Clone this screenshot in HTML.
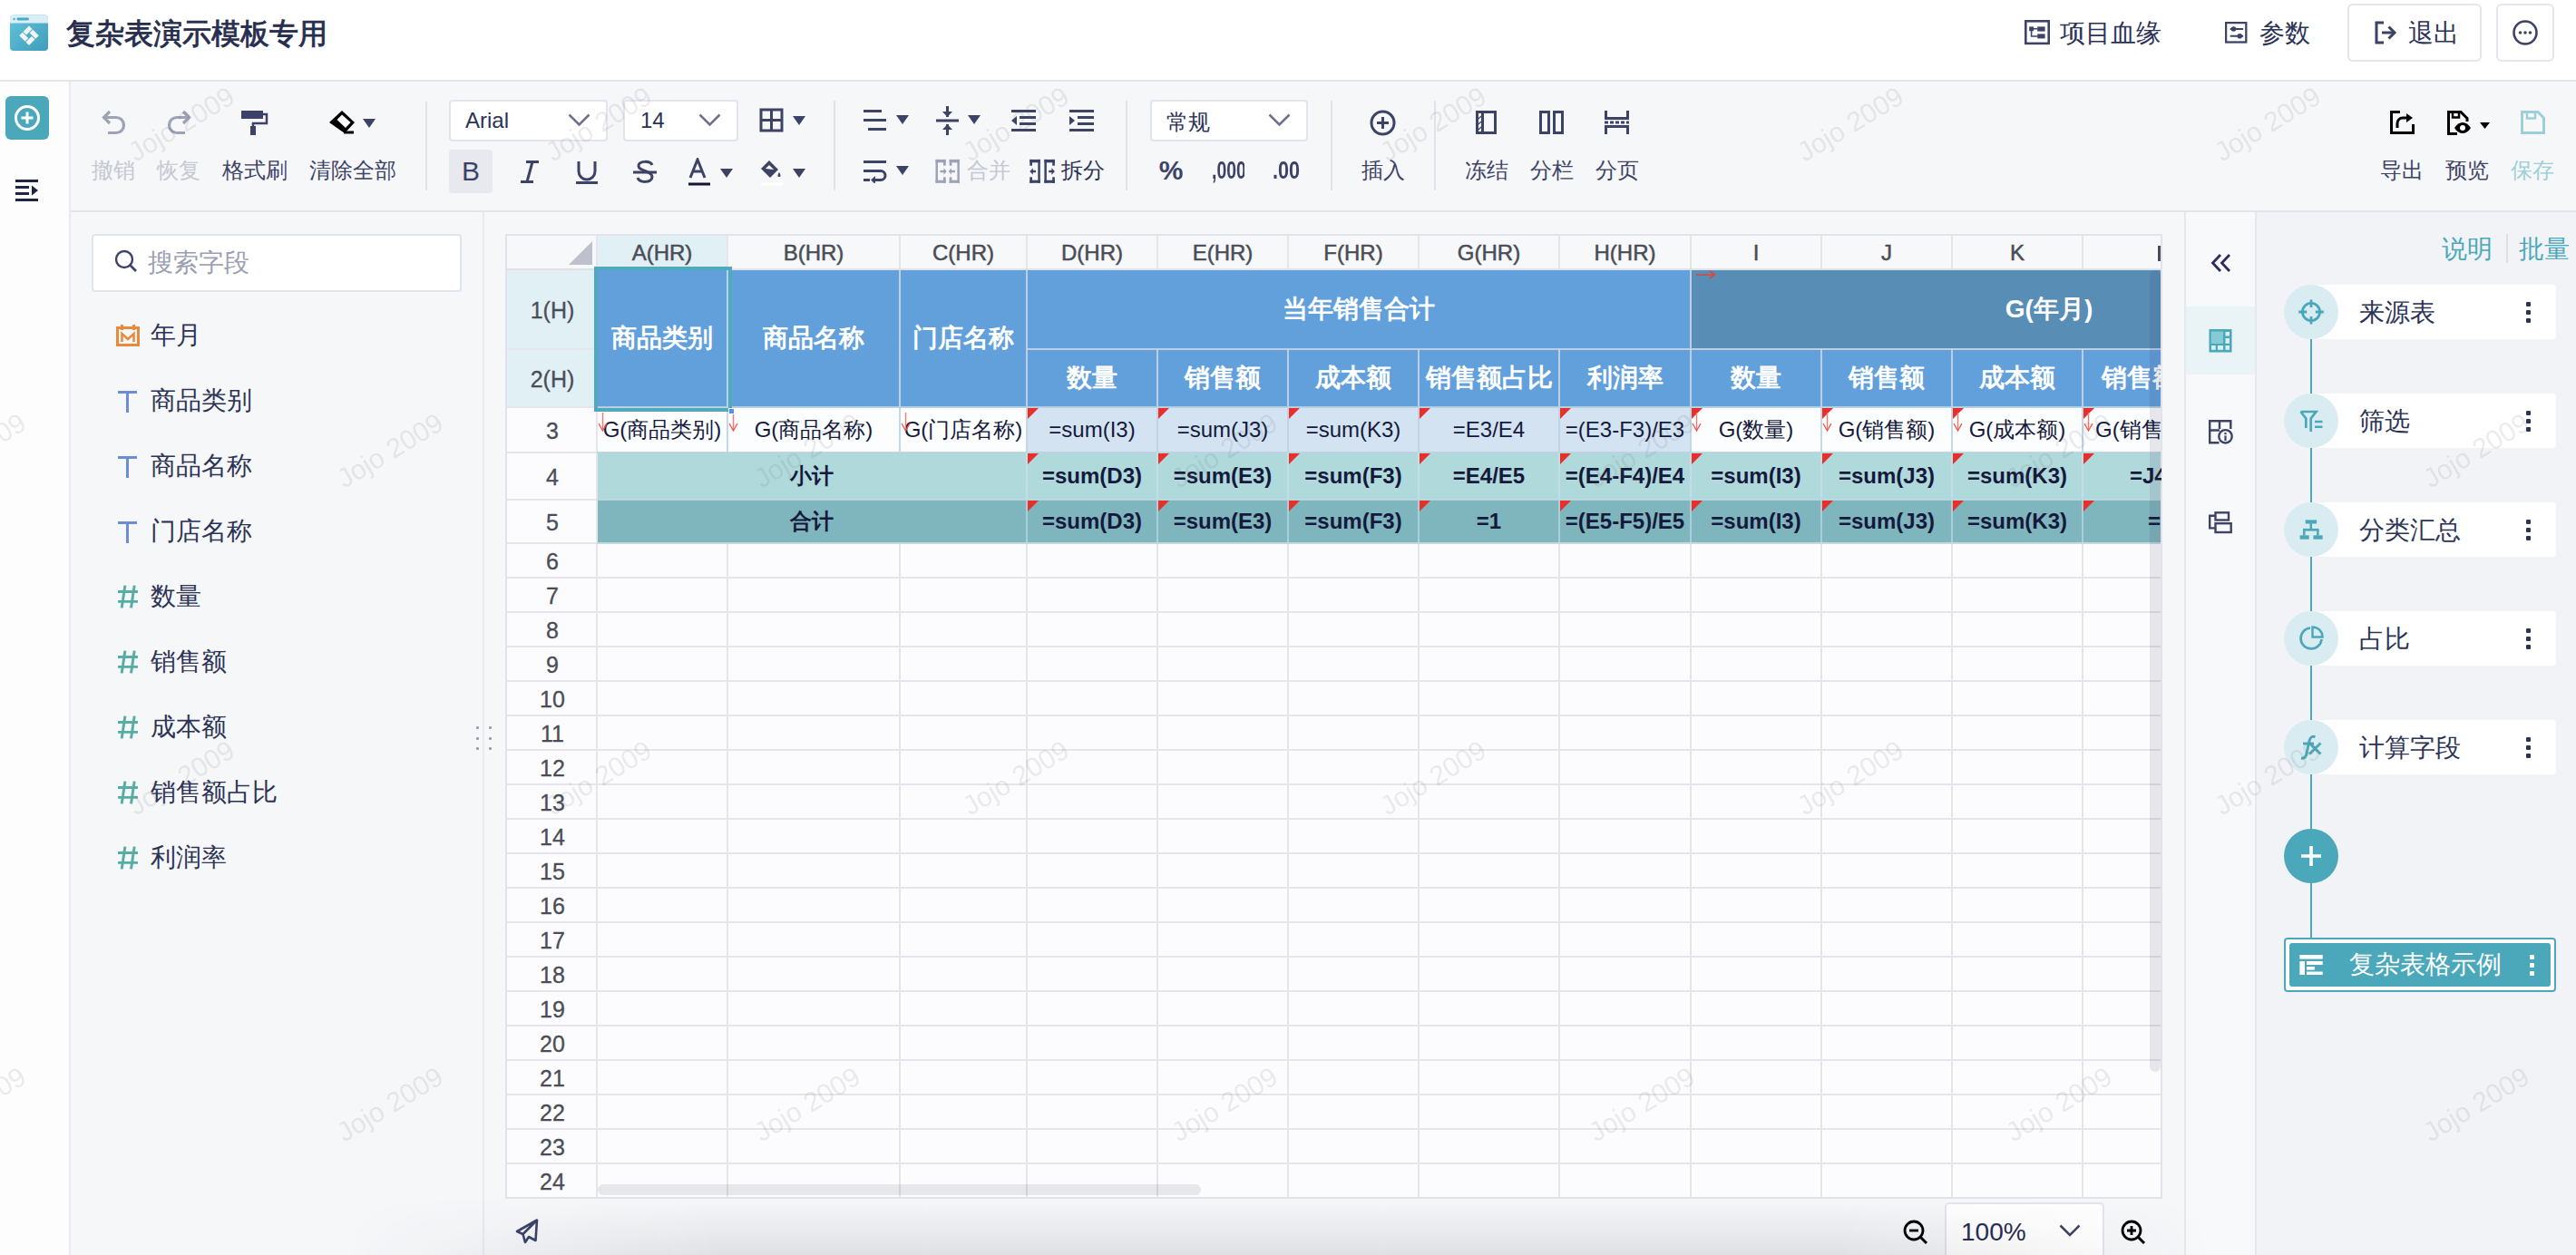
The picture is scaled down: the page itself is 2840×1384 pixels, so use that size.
<!DOCTYPE html><html><head><meta charset="utf-8"><style>
html,body{margin:0;padding:0;}
body{width:2840px;height:1384px;overflow:hidden;position:relative;background:#fff;font-family:"Liberation Sans",sans-serif;color:#2c3356;}
div,svg{box-sizing:border-box;}
</style></head><body>
<div style="position:absolute;left:0px;top:0px;width:2840px;height:88px;background:#ffffff;"></div>
<div style="position:absolute;left:0px;top:88px;width:2840px;height:2px;background:#e4e4ec;"></div>
<svg style="position:absolute;left:11px;top:16px;" width="42" height="40" viewBox="0 0 42 40"><defs><linearGradient id="lg" x1="0" y1="0" x2="1" y2="1"><stop offset="0" stop-color="#62c4dc"/><stop offset="1" stop-color="#3f9dbb"/></linearGradient></defs>
<rect x="0" y="0.5" width="42" height="39.5" rx="4" fill="url(#lg)"/>
<path d="M4 0.5 H38 A4 4 0 0 1 42 4.5 V9.5 H0 V4.5 A4 4 0 0 1 4 0.5 Z" fill="#d9eef5"/>
<circle cx="4.6" cy="5" r="1.3" fill="#56b5cd"/><rect x="7.5" y="3.6" width="13.5" height="2.8" rx="1.4" fill="#4aa9c3"/>
<g fill="#f4f6f7" transform="translate(21,23.2) scale(-1,1) rotate(45)"><rect x="-7.6" y="-7.6" width="9.2" height="5"/><rect x="2.6" y="-7.6" width="5" height="9.2"/><rect x="-1.6" y="2.6" width="9.2" height="5"/><rect x="-7.6" y="-1.6" width="5" height="9.2"/></g></svg>
<div style="position:absolute;left:73px;top:13px;width:320px;height:48px;line-height:48px;text-align:left;white-space:nowrap;overflow:hidden;font-size:32px;color:#272d4e;-webkit-text-stroke:0.9px #272d4e;">复杂表演示模板专用</div>
<svg style="position:absolute;left:2232px;top:22px;" width="28" height="28" viewBox="0 0 28 28"><rect x="1.3" y="1.3" width="25.4" height="24.6" fill="none" stroke="#3d4367" stroke-width="2.6"/><rect x="5.2" y="7.4" width="4.8" height="4.8" fill="#3d4367"/><rect x="14.2" y="7.4" width="8.4" height="5.2" fill="#3d4367"/><rect x="14.2" y="15.4" width="8.4" height="5" fill="#3d4367"/><path d="M10 9.8 H14.2 M7.6 12 V18 H14.2" fill="none" stroke="#3d4367" stroke-width="1.6"/></svg>
<div style="position:absolute;left:2271px;top:15px;width:120px;height:44px;line-height:44px;text-align:left;white-space:nowrap;overflow:hidden;font-size:28px;color:#2c3356;">项目血缘</div>
<svg style="position:absolute;left:2453px;top:24px;" width="26" height="24" viewBox="0 0 26 24"><rect x="1.1" y="1.1" width="22.2" height="21.4" fill="none" stroke="#3d4367" stroke-width="2.3"/><path d="M5.7 8 H20.1 M5.7 15.8 H20.1" stroke="#3d4367" stroke-width="2"/><circle cx="9.5" cy="8" r="2.8" fill="#3d4367"/><circle cx="16.3" cy="15.8" r="2.8" fill="#3d4367"/></svg>
<div style="position:absolute;left:2491px;top:15px;width:70px;height:44px;line-height:44px;text-align:left;white-space:nowrap;overflow:hidden;font-size:28px;color:#2c3356;">参数</div>
<div style="position:absolute;left:2588px;top:4px;width:148px;height:64px;border:2px solid #e4e6ee;border-radius:6px;background:#fff;"></div>
<svg style="position:absolute;left:2617px;top:23px;" width="26" height="26" viewBox="0 0 26 26"><path d="M11 2 H3 V24 H11" fill="none" stroke="#3d4367" stroke-width="3"/><path d="M9 13 H22" stroke="#3d4367" stroke-width="3"/><path d="M16.5 6.5 L23 13 L16.5 19.5" fill="none" stroke="#3d4367" stroke-width="3"/></svg>
<div style="position:absolute;left:2655px;top:15px;width:70px;height:44px;line-height:44px;text-align:left;white-space:nowrap;overflow:hidden;font-size:28px;color:#2c3356;">退出</div>
<div style="position:absolute;left:2752px;top:4px;width:64px;height:64px;border:2px solid #e4e6ee;border-radius:6px;background:#fff;"></div>
<svg style="position:absolute;left:2770px;top:22px;" width="28" height="28" viewBox="0 0 28 28"><circle cx="14" cy="14" r="12.5" fill="none" stroke="#3d4367" stroke-width="2.6"/><circle cx="8.5" cy="14" r="1.8" fill="#3d4367"/><circle cx="14" cy="14" r="1.8" fill="#3d4367"/><circle cx="19.5" cy="14" r="1.8" fill="#3d4367"/></svg>
<div style="position:absolute;left:0px;top:90px;width:76px;height:1294px;background:#fdfdfe;"></div>
<div style="position:absolute;left:76px;top:90px;width:2px;height:1294px;background:#e8eaf0;"></div>
<div style="position:absolute;left:6px;top:106px;width:48px;height:48px;background:#4ba8ba;border-radius:6px;"></div>
<svg style="position:absolute;left:14px;top:114px;" width="32" height="32" viewBox="0 0 32 32"><circle cx="16" cy="16" r="12.5" fill="none" stroke="#fff" stroke-width="3"/><path d="M16 9.5 V22.5 M9.5 16 H22.5" stroke="#fff" stroke-width="3"/></svg>
<svg style="position:absolute;left:17px;top:198px;" width="26" height="24" viewBox="0 0 26 24"><rect x="0" y="0" width="25" height="3" fill="#1f2547"/><rect x="0" y="7" width="15" height="3" fill="#1f2547"/><rect x="0" y="14" width="15" height="3" fill="#1f2547"/><rect x="0" y="21" width="25" height="3" fill="#1f2547"/><path d="M18 6.5 L25 12 L18 17.5 Z" fill="#1f2547"/></svg>
<div style="position:absolute;left:78px;top:90px;width:2762px;height:142px;background:#f6f7f9;"></div>
<div style="position:absolute;left:78px;top:232px;width:2762px;height:2px;background:#e4e4ec;"></div>
<svg style="position:absolute;left:112px;top:121px;" width="27" height="28" viewBox="0 0 27 28"><path d="M9 2 L2.5 8.5 L9 15" fill="none" stroke="#9ea2b6" stroke-width="3.2"/><path d="M3 8.5 H16 A8.5 8.5 0 0 1 16 25.5 H7" fill="none" stroke="#9ea2b6" stroke-width="3.2"/></svg>
<div style="position:absolute;left:24.5px;top:175px;width:200px;height:26px;line-height:26px;text-align:center;white-space:nowrap;overflow:hidden;font-size:24px;color:#c5c7d3;">撤销</div>
<svg style="position:absolute;left:184px;top:121px;" width="27" height="28" viewBox="0 0 27 28"><path d="M18 2 L24.5 8.5 L18 15" fill="none" stroke="#9ea2b6" stroke-width="3.2"/><path d="M24 8.5 H11 A8.5 8.5 0 0 0 11 25.5 H20" fill="none" stroke="#9ea2b6" stroke-width="3.2"/></svg>
<div style="position:absolute;left:96.5px;top:175px;width:200px;height:26px;line-height:26px;text-align:center;white-space:nowrap;overflow:hidden;font-size:24px;color:#c5c7d3;">恢复</div>
<svg style="position:absolute;left:266px;top:122px;" width="30" height="27" viewBox="0 0 30 27"><rect x="0" y="0" width="24" height="9" fill="#3d4367"/><path d="M24 4 H28 V14 H13 V18" fill="none" stroke="#3d4367" stroke-width="2.5"/><rect x="10" y="17" width="6" height="10" fill="#3d4367"/></svg>
<div style="position:absolute;left:180.5px;top:175px;width:200px;height:26px;line-height:26px;text-align:center;white-space:nowrap;overflow:hidden;font-size:24px;color:#3d4367;">格式刷</div>
<svg style="position:absolute;left:362px;top:121px;" width="54" height="29" viewBox="0 0 54 29"><path d="M15 1 L29 14 L18 26 L1 14 Z" fill="#000"/><path d="M15 5.5 L24.5 14 L19 20 L9.5 11 Z" fill="#fff"/><rect x="17" y="23.5" width="11" height="3" fill="#000"/><path d="M38 10 H52 L45 20 Z" fill="#3d4367"/></svg>
<div style="position:absolute;left:289px;top:175px;width:200px;height:26px;line-height:26px;text-align:center;white-space:nowrap;overflow:hidden;font-size:24px;color:#3d4367;">清除全部</div>
<div style="position:absolute;left:469px;top:112px;width:2px;height:98px;background:#e1e3ea;"></div>
<div style="position:absolute;left:495px;top:110px;width:175px;height:46px;background:#fff;border:2px solid #e3e5ec;border-radius:4px;"></div>
<div style="position:absolute;left:513px;top:110px;width:100px;height:46px;line-height:46px;text-align:left;white-space:nowrap;overflow:hidden;font-size:24px;color:#2c3356;">Arial</div>
<svg style="position:absolute;left:626px;top:125px;" width="25" height="15" viewBox="0 0 25 15"><path d="M1.5 1.5 L12.5 12.5 L23.5 1.5" fill="none" stroke="#6b7090" stroke-width="2.5"/></svg>
<div style="position:absolute;left:687px;top:110px;width:127px;height:46px;background:#fff;border:2px solid #e3e5ec;border-radius:4px;"></div>
<div style="position:absolute;left:706px;top:110px;width:60px;height:46px;line-height:46px;text-align:left;white-space:nowrap;overflow:hidden;font-size:24px;color:#2c3356;">14</div>
<svg style="position:absolute;left:770px;top:125px;" width="25" height="15" viewBox="0 0 25 15"><path d="M1.5 1.5 L12.5 12.5 L23.5 1.5" fill="none" stroke="#6b7090" stroke-width="2.5"/></svg>
<svg style="position:absolute;left:837px;top:119px;" width="52" height="28" viewBox="0 0 52 28"><rect x="2" y="2" width="23" height="23" fill="none" stroke="#3d4367" stroke-width="3"/><path d="M13.5 2 V25 M2 13.5 H25" stroke="#3d4367" stroke-width="3"/><path d="M37 9 H51 L44 19 Z" fill="#3d4367"/></svg>
<div style="position:absolute;left:495px;top:165px;width:48px;height:48px;background:#e8e9ee;border-radius:4px;"></div>
<div style="position:absolute;left:495px;top:165px;width:48px;height:48px;line-height:48px;text-align:center;white-space:nowrap;overflow:hidden;font-size:30px;color:#3d4367;">B</div>
<svg style="position:absolute;left:573px;top:177px;" width="22" height="25" viewBox="0 0 22 25"><path d="M7 1.5 H21 M1 23.5 H15 M14 1.5 L8 23.5" fill="none" stroke="#3d4367" stroke-width="3"/></svg>
<svg style="position:absolute;left:633px;top:176px;" width="28" height="28" viewBox="0 0 28 28"><path d="M5 2 V13 A9 9 0 0 0 23 13 V2" fill="none" stroke="#3d4367" stroke-width="3"/><rect x="2" y="24" width="24" height="3" fill="#3d4367"/></svg>
<svg style="position:absolute;left:697px;top:176px;" width="28" height="28" viewBox="0 0 28 28"><path d="M22 6 C20 1 7 1 7 7 C7 13 22 12 22 19 C22 26 8 26 6 20" fill="none" stroke="#3d4367" stroke-width="3"/><rect x="1" y="12.5" width="26" height="3" fill="#3d4367"/></svg>
<svg style="position:absolute;left:756px;top:174px;" width="56" height="32" viewBox="0 0 56 32"><path d="M5 22 L13 2 L21 22 M8 15 H18" fill="none" stroke="#3d4367" stroke-width="3"/><rect x="3" y="27.5" width="24" height="3" fill="#121536"/><path d="M38 12 H52 L45 22 Z" fill="#3d4367"/></svg>
<svg style="position:absolute;left:836px;top:174px;" width="56" height="32" viewBox="0 0 56 32"><path d="M3 12 L12 3 L22 13 L13 22 Z" fill="#3d4367"/><path d="M8 12 L12 8 L17 13 Z" fill="#fff"/><path d="M23 16 C21 19 21 21 23 21 C25 21 25 19 23 16 Z" fill="#3d4367"/><rect x="3" y="27.5" width="24" height="3" fill="#ffffff"/><path d="M38 12 H52 L45 22 Z" fill="#3d4367"/></svg>
<div style="position:absolute;left:919px;top:111px;width:2px;height:99px;background:#e1e3ea;"></div>
<svg style="position:absolute;left:951px;top:120px;" width="52" height="26" viewBox="0 0 52 26"><rect x="1" y="1" width="20" height="3" fill="#3d4367"/><rect x="1" y="11" width="25" height="3" fill="#3d4367"/><rect x="6" y="21" width="20" height="3" fill="#3d4367"/><path d="M37 7 H51 L44 17 Z" fill="#3d4367"/></svg>
<svg style="position:absolute;left:1032px;top:117px;" width="52" height="32" viewBox="0 0 52 32"><rect x="0" y="14.5" width="25" height="3" fill="#3d4367"/><path d="M12.5 0 V12 M12.5 20 V32" stroke="#3d4367" stroke-width="3"/><path d="M7 6 L12.5 12 L18 6 Z M7 26 L12.5 20 L18 26 Z" fill="#3d4367"/><path d="M35 10 H49 L42 20 Z" fill="#3d4367"/></svg>
<svg style="position:absolute;left:1115px;top:120px;" width="28" height="26" viewBox="0 0 28 26"><rect x="0" y="1" width="27" height="3" fill="#3d4367"/><rect x="9" y="8" width="18" height="3" fill="#3d4367"/><rect x="9" y="15" width="18" height="3" fill="#3d4367"/><rect x="0" y="22" width="27" height="3" fill="#3d4367"/><path d="M6 8 L0 13 L6 18 Z" fill="#3d4367"/></svg>
<svg style="position:absolute;left:1179px;top:120px;" width="28" height="26" viewBox="0 0 28 26"><rect x="0" y="1" width="27" height="3" fill="#3d4367"/><rect x="9" y="8" width="18" height="3" fill="#3d4367"/><rect x="9" y="15" width="18" height="3" fill="#3d4367"/><rect x="0" y="22" width="27" height="3" fill="#3d4367"/><path d="M0 8 L6 13 L0 18 Z" fill="#3d4367"/></svg>
<svg style="position:absolute;left:951px;top:176px;" width="52" height="26" viewBox="0 0 52 26"><rect x="1" y="1" width="25" height="3" fill="#3d4367"/><path d="M1 12.5 H20 A5 5 0 0 1 20 22.5 H12" fill="none" stroke="#3d4367" stroke-width="3"/><path d="M14 18 L9 22.5 L14 27 Z" fill="#3d4367"/><rect x="1" y="21" width="7" height="3" fill="#3d4367"/><path d="M37 7 H51 L44 17 Z" fill="#3d4367"/></svg>
<svg style="position:absolute;left:1030px;top:175px;" width="30" height="28" viewBox="0 0 30 28"><g fill="#9ea2b6"><rect x="1.50" y="0.9" width="2.5" height="25.9"/><rect x="25.40" y="0.9" width="2.5" height="25.9"/><rect x="1.50" y="0.9" width="11.2" height="3.4"/><rect x="16.70" y="0.9" width="11.2" height="3.4"/><rect x="1.50" y="23.7" width="11.2" height="3.1"/><rect x="16.70" y="23.7" width="11.2" height="3.1"/><rect x="10.00" y="0.9" width="2.7" height="6.8"/><rect x="16.70" y="0.9" width="2.7" height="6.8"/><rect x="10.00" y="20.3" width="2.7" height="6.5"/><rect x="16.70" y="20.3" width="2.7" height="6.5"/><rect x="6.50" y="12.8" width="4.5" height="2.4"/><rect x="18.40" y="12.8" width="4.5" height="2.4"/><path d="M10.5 10.3 L13.6 14 L10.5 17.7 Z M18.9 10.3 L15.8 14 L18.9 17.7 Z"/></g></svg>
<div style="position:absolute;left:1066px;top:175px;width:50px;height:26px;line-height:26px;text-align:left;white-space:nowrap;overflow:hidden;font-size:24px;color:#c5c7d3;">合并</div>
<svg style="position:absolute;left:1134px;top:175px;" width="31" height="28" viewBox="0 0 31 28"><g fill="#3d4367"><rect x="10.30" y="0.9" width="2.5" height="25.9"/><rect x="17.40" y="0.9" width="2.5" height="25.9"/><rect x="1.30" y="0.9" width="11.5" height="3.4"/><rect x="17.40" y="0.9" width="11.5" height="3.4"/><rect x="1.30" y="23.7" width="11.5" height="3.1"/><rect x="17.40" y="23.7" width="11.5" height="3.1"/><rect x="1.30" y="0.9" width="2.7" height="6.8"/><rect x="26.20" y="0.9" width="2.7" height="6.8"/><rect x="1.30" y="20.3" width="2.7" height="6.5"/><rect x="26.20" y="20.3" width="2.7" height="6.5"/><rect x="4.00" y="12.8" width="4" height="2.4"/><rect x="22.20" y="12.8" width="4" height="2.4"/><path d="M1.3 14 L4.8 10.3 V17.7 Z M28.9 14 L25.4 10.3 V17.7 Z"/></g></svg>
<div style="position:absolute;left:1170px;top:175px;width:50px;height:26px;line-height:26px;text-align:left;white-space:nowrap;overflow:hidden;font-size:24px;color:#2c3356;">拆分</div>
<div style="position:absolute;left:1241px;top:111px;width:2px;height:99px;background:#e1e3ea;"></div>
<div style="position:absolute;left:1268px;top:110px;width:174px;height:46px;background:#fff;border:2px solid #e3e5ec;border-radius:4px;"></div>
<div style="position:absolute;left:1286px;top:112px;width:80px;height:46px;line-height:46px;text-align:left;white-space:nowrap;overflow:hidden;font-size:24px;color:#2c3356;">常规</div>
<svg style="position:absolute;left:1398px;top:125px;" width="25" height="15" viewBox="0 0 25 15"><path d="M1.5 1.5 L12.5 12.5 L23.5 1.5" fill="none" stroke="#6b7090" stroke-width="2.5"/></svg>
<div style="position:absolute;left:1271px;top:170px;width:40px;height:36px;line-height:36px;text-align:center;white-space:nowrap;overflow:hidden;font-size:30px;font-weight:bold;color:#3d4367;">%</div>
<div style="position:absolute;left:1329px;top:170px;width:50px;height:36px;line-height:36px;text-align:center;white-space:nowrap;overflow:hidden;font-size:27px;font-weight:bold;color:#3d4367;transform:scaleX(0.72);">,000</div>
<div style="position:absolute;left:1393px;top:170px;width:50px;height:36px;line-height:36px;text-align:center;white-space:nowrap;overflow:hidden;font-size:27px;font-weight:bold;color:#3d4367;transform:scaleX(0.8);">.00</div>
<div style="position:absolute;left:1467px;top:111px;width:2px;height:99px;background:#e1e3ea;"></div>
<svg style="position:absolute;left:1510px;top:121px;" width="30" height="29" viewBox="0 0 30 29"><circle cx="14.5" cy="14.5" r="12.5" fill="none" stroke="#3d4367" stroke-width="3"/><path d="M14.5 8 V21 M8 14.5 H21" stroke="#3d4367" stroke-width="3"/></svg>
<div style="position:absolute;left:1425px;top:175px;width:200px;height:26px;line-height:26px;text-align:center;white-space:nowrap;overflow:hidden;font-size:24px;color:#3d4367;">插入</div>
<div style="position:absolute;left:1581px;top:111px;width:2px;height:99px;background:#e1e3ea;"></div>
<svg style="position:absolute;left:1627px;top:122px;" width="24" height="26" viewBox="0 0 24 26"><rect x="1.5" y="1.5" width="20" height="23" fill="none" stroke="#3d4367" stroke-width="3"/><rect x="6" y="1.5" width="3" height="23" fill="#3d4367"/><path d="M3 9 L6 6 M3 15 L6 12 M3 21 L6 18" stroke="#3d4367" stroke-width="1.2"/></svg>
<div style="position:absolute;left:1539px;top:175px;width:200px;height:26px;line-height:26px;text-align:center;white-space:nowrap;overflow:hidden;font-size:24px;color:#3d4367;">冻结</div>
<svg style="position:absolute;left:1697px;top:122px;" width="27" height="26" viewBox="0 0 27 26"><rect x="1.5" y="1.5" width="9" height="23" fill="none" stroke="#3d4367" stroke-width="3"/><rect x="16.5" y="1.5" width="9" height="23" fill="none" stroke="#3d4367" stroke-width="3"/></svg>
<div style="position:absolute;left:1611px;top:175px;width:200px;height:26px;line-height:26px;text-align:center;white-space:nowrap;overflow:hidden;font-size:24px;color:#3d4367;">分栏</div>
<svg style="position:absolute;left:1769px;top:122px;" width="27" height="26" viewBox="0 0 27 26"><path d="M1.5 0 V8.5 H25.5 V0 M1.5 26 V17.5 H25.5 V26" fill="none" stroke="#3d4367" stroke-width="3"/><path d="M0 13 H27" stroke="#3d4367" stroke-width="3" stroke-dasharray="4 2"/></svg>
<div style="position:absolute;left:1683px;top:175px;width:200px;height:26px;line-height:26px;text-align:center;white-space:nowrap;overflow:hidden;font-size:24px;color:#3d4367;">分页</div>
<svg style="position:absolute;left:2635px;top:122px;" width="27" height="26" viewBox="0 0 27 26"><path d="M11 1.5 H1.5 V24.5 H25.5 V15" fill="none" stroke="#000" stroke-width="3"/><path d="M8 19 V14 A6 6 0 0 1 14 8 H22" fill="none" stroke="#000" stroke-width="3"/><path d="M18 3 L25 8 L18 13 Z" fill="#000"/></svg>
<div style="position:absolute;left:2548px;top:175px;width:200px;height:26px;line-height:26px;text-align:center;white-space:nowrap;overflow:hidden;font-size:24px;color:#3d4367;">导出</div>
<svg style="position:absolute;left:2698px;top:122px;" width="50" height="27" viewBox="0 0 50 27"><path d="M11 25.5 H1.5 V1.5 H15 L22 8.5 V12" fill="none" stroke="#000" stroke-width="3"/><rect x="6" y="1.5" width="7" height="6" fill="none" stroke="#000" stroke-width="2.5"/><path d="M8 19 C13 11 21 11 26 19 C21 27 13 27 8 19 Z" fill="#000"/><circle cx="17" cy="19" r="3" fill="#fff"/><path d="M36 13 H47 L41.5 20 Z" fill="#000"/></svg>
<div style="position:absolute;left:2619.5px;top:175px;width:200px;height:26px;line-height:26px;text-align:center;white-space:nowrap;overflow:hidden;font-size:24px;color:#3d4367;">预览</div>
<svg style="position:absolute;left:2779px;top:122px;" width="27" height="26" viewBox="0 0 27 26"><path d="M1.5 1.5 H19 L25.5 8 V24.5 H1.5 Z" fill="none" stroke="#9dcfd9" stroke-width="3"/><rect x="7" y="1.5" width="9" height="7" fill="none" stroke="#9dcfd9" stroke-width="2.5"/></svg>
<div style="position:absolute;left:2692px;top:175px;width:200px;height:26px;line-height:26px;text-align:center;white-space:nowrap;overflow:hidden;font-size:24px;color:#9ecfd8;">保存</div>
<div style="position:absolute;left:78px;top:234px;width:454px;height:1150px;background:#f6f7f9;"></div>
<div style="position:absolute;left:532px;top:234px;width:2px;height:1150px;background:#e8eaf0;"></div>
<div style="position:absolute;left:101px;top:258px;width:408px;height:64px;background:#fff;border:2px solid #e3e5ec;border-radius:4px;"></div>
<svg style="position:absolute;left:126px;top:275px;" width="26" height="26" viewBox="0 0 26 26"><circle cx="11" cy="11" r="9" fill="none" stroke="#3d4367" stroke-width="2.4"/><path d="M17.5 17.5 L24 24" stroke="#3d4367" stroke-width="2.6"/></svg>
<div style="position:absolute;left:163px;top:270px;width:150px;height:40px;line-height:40px;text-align:left;white-space:nowrap;overflow:hidden;font-size:28px;color:#9a9fb4;">搜索字段</div>
<svg style="position:absolute;left:128px;top:358px;" width="26" height="24" viewBox="0 0 26 24"><rect x="1.5" y="3.5" width="23" height="19" fill="none" stroke="#e8893b" stroke-width="3"/><rect x="5" y="0" width="3" height="6" fill="#e8893b"/><rect x="18" y="0" width="3" height="6" fill="#e8893b"/><path d="M6.5 19 V10 L13 16 L19.5 10 V19" fill="none" stroke="#e8893b" stroke-width="2.5"/></svg>
<div style="position:absolute;left:166px;top:348px;width:300px;height:44px;line-height:44px;text-align:left;white-space:nowrap;overflow:hidden;font-size:28px;color:#2c3356;">年月</div>
<svg style="position:absolute;left:130px;top:431px;" width="22" height="24" viewBox="0 0 22 24"><rect x="0" y="0" width="21" height="3" fill="#6d8ed6"/><rect x="9" y="0" width="3" height="24" fill="#6d8ed6"/></svg>
<div style="position:absolute;left:166px;top:420px;width:300px;height:44px;line-height:44px;text-align:left;white-space:nowrap;overflow:hidden;font-size:28px;color:#2c3356;">商品类别</div>
<svg style="position:absolute;left:130px;top:503px;" width="22" height="24" viewBox="0 0 22 24"><rect x="0" y="0" width="21" height="3" fill="#6d8ed6"/><rect x="9" y="0" width="3" height="24" fill="#6d8ed6"/></svg>
<div style="position:absolute;left:166px;top:492px;width:300px;height:44px;line-height:44px;text-align:left;white-space:nowrap;overflow:hidden;font-size:28px;color:#2c3356;">商品名称</div>
<svg style="position:absolute;left:130px;top:575px;" width="22" height="24" viewBox="0 0 22 24"><rect x="0" y="0" width="21" height="3" fill="#6d8ed6"/><rect x="9" y="0" width="3" height="24" fill="#6d8ed6"/></svg>
<div style="position:absolute;left:166px;top:564px;width:300px;height:44px;line-height:44px;text-align:left;white-space:nowrap;overflow:hidden;font-size:28px;color:#2c3356;">门店名称</div>
<svg style="position:absolute;left:130px;top:645px;" width="22" height="26" viewBox="0 0 22 26"><path d="M0 7.5 H22 M0 18.4 H22" stroke="#58ada3" stroke-width="2.9"/><path d="M7.9 0.6 L4.2 25.4 M18.2 0.6 L14.5 25.4" stroke="#58ada3" stroke-width="3"/></svg>
<div style="position:absolute;left:166px;top:636px;width:300px;height:44px;line-height:44px;text-align:left;white-space:nowrap;overflow:hidden;font-size:28px;color:#2c3356;">数量</div>
<svg style="position:absolute;left:130px;top:717px;" width="22" height="26" viewBox="0 0 22 26"><path d="M0 7.5 H22 M0 18.4 H22" stroke="#58ada3" stroke-width="2.9"/><path d="M7.9 0.6 L4.2 25.4 M18.2 0.6 L14.5 25.4" stroke="#58ada3" stroke-width="3"/></svg>
<div style="position:absolute;left:166px;top:708px;width:300px;height:44px;line-height:44px;text-align:left;white-space:nowrap;overflow:hidden;font-size:28px;color:#2c3356;">销售额</div>
<svg style="position:absolute;left:130px;top:789px;" width="22" height="26" viewBox="0 0 22 26"><path d="M0 7.5 H22 M0 18.4 H22" stroke="#58ada3" stroke-width="2.9"/><path d="M7.9 0.6 L4.2 25.4 M18.2 0.6 L14.5 25.4" stroke="#58ada3" stroke-width="3"/></svg>
<div style="position:absolute;left:166px;top:780px;width:300px;height:44px;line-height:44px;text-align:left;white-space:nowrap;overflow:hidden;font-size:28px;color:#2c3356;">成本额</div>
<svg style="position:absolute;left:130px;top:861px;" width="22" height="26" viewBox="0 0 22 26"><path d="M0 7.5 H22 M0 18.4 H22" stroke="#58ada3" stroke-width="2.9"/><path d="M7.9 0.6 L4.2 25.4 M18.2 0.6 L14.5 25.4" stroke="#58ada3" stroke-width="3"/></svg>
<div style="position:absolute;left:166px;top:852px;width:300px;height:44px;line-height:44px;text-align:left;white-space:nowrap;overflow:hidden;font-size:28px;color:#2c3356;">销售额占比</div>
<svg style="position:absolute;left:130px;top:933px;" width="22" height="26" viewBox="0 0 22 26"><path d="M0 7.5 H22 M0 18.4 H22" stroke="#58ada3" stroke-width="2.9"/><path d="M7.9 0.6 L4.2 25.4 M18.2 0.6 L14.5 25.4" stroke="#58ada3" stroke-width="3"/></svg>
<div style="position:absolute;left:166px;top:924px;width:300px;height:44px;line-height:44px;text-align:left;white-space:nowrap;overflow:hidden;font-size:28px;color:#2c3356;">利润率</div>
<div style="position:absolute;left:534px;top:234px;width:1874px;height:1150px;background:#f6f7f9;"></div>
<div style="position:absolute;left:525px;top:801px;width:2.5px;height:2.5px;background:#9a9db0;border-radius:1px;"></div>
<div style="position:absolute;left:525px;top:813px;width:2.5px;height:2.5px;background:#9a9db0;border-radius:1px;"></div>
<div style="position:absolute;left:525px;top:824px;width:2.5px;height:2.5px;background:#9a9db0;border-radius:1px;"></div>
<div style="position:absolute;left:539px;top:801px;width:2.5px;height:2.5px;background:#9a9db0;border-radius:1px;"></div>
<div style="position:absolute;left:539px;top:813px;width:2.5px;height:2.5px;background:#9a9db0;border-radius:1px;"></div>
<div style="position:absolute;left:539px;top:824px;width:2.5px;height:2.5px;background:#9a9db0;border-radius:1px;"></div>
<div style="position:absolute;left:558px;top:259px;width:1825px;height:1062px;background:#fcfcfe;"></div>
<div style="position:absolute;left:558px;top:259px;width:1825px;height:38px;background:#f7f8fa;"></div>
<div style="position:absolute;left:658px;top:259px;width:144px;height:38px;background:#e1f0f5;"></div>
<div style="position:absolute;left:558px;top:297px;width:100px;height:152px;background:#e1f0f5;"></div>
<div style="position:absolute;left:558px;top:449px;width:100px;height:872px;background:#fcfcfe;"></div>
<div style="position:absolute;left:658px;top:297px;width:1725px;height:152px;background:#62a0dc;"></div>
<div style="position:absolute;left:1864px;top:297px;width:519px;height:88px;background:#588db6;"></div>
<div style="position:absolute;left:1132px;top:449px;width:732px;height:50px;background:#d3e3f2;"></div>
<div style="position:absolute;left:658px;top:449px;width:474px;height:50px;background:#fcfdff;"></div>
<div style="position:absolute;left:1864px;top:449px;width:519px;height:50px;background:#fcfdff;"></div>
<div style="position:absolute;left:658px;top:499px;width:1725px;height:52px;background:#b0d9db;"></div>
<div style="position:absolute;left:658px;top:551px;width:1725px;height:48px;background:#7fb5bd;"></div>
<div style="position:absolute;left:558px;top:598px;width:1825px;height:2px;background:#e5e5eb;"></div>
<div style="position:absolute;left:558px;top:636px;width:1825px;height:2px;background:#e5e5eb;"></div>
<div style="position:absolute;left:558px;top:674px;width:1825px;height:2px;background:#e5e5eb;"></div>
<div style="position:absolute;left:558px;top:712px;width:1825px;height:2px;background:#e5e5eb;"></div>
<div style="position:absolute;left:558px;top:750px;width:1825px;height:2px;background:#e5e5eb;"></div>
<div style="position:absolute;left:558px;top:788px;width:1825px;height:2px;background:#e5e5eb;"></div>
<div style="position:absolute;left:558px;top:826px;width:1825px;height:2px;background:#e5e5eb;"></div>
<div style="position:absolute;left:558px;top:864px;width:1825px;height:2px;background:#e5e5eb;"></div>
<div style="position:absolute;left:558px;top:902px;width:1825px;height:2px;background:#e5e5eb;"></div>
<div style="position:absolute;left:558px;top:940px;width:1825px;height:2px;background:#e5e5eb;"></div>
<div style="position:absolute;left:558px;top:978px;width:1825px;height:2px;background:#e5e5eb;"></div>
<div style="position:absolute;left:558px;top:1016px;width:1825px;height:2px;background:#e5e5eb;"></div>
<div style="position:absolute;left:558px;top:1054px;width:1825px;height:2px;background:#e5e5eb;"></div>
<div style="position:absolute;left:558px;top:1092px;width:1825px;height:2px;background:#e5e5eb;"></div>
<div style="position:absolute;left:558px;top:1130px;width:1825px;height:2px;background:#e5e5eb;"></div>
<div style="position:absolute;left:558px;top:1168px;width:1825px;height:2px;background:#e5e5eb;"></div>
<div style="position:absolute;left:558px;top:1206px;width:1825px;height:2px;background:#e5e5eb;"></div>
<div style="position:absolute;left:558px;top:1244px;width:1825px;height:2px;background:#e5e5eb;"></div>
<div style="position:absolute;left:558px;top:1282px;width:1825px;height:2px;background:#e5e5eb;"></div>
<div style="position:absolute;left:657px;top:599px;width:2px;height:722px;background:#e5e5eb;"></div>
<div style="position:absolute;left:801px;top:599px;width:2px;height:722px;background:#e5e5eb;"></div>
<div style="position:absolute;left:991px;top:599px;width:2px;height:722px;background:#e5e5eb;"></div>
<div style="position:absolute;left:1131px;top:599px;width:2px;height:722px;background:#e5e5eb;"></div>
<div style="position:absolute;left:1275px;top:599px;width:2px;height:722px;background:#e5e5eb;"></div>
<div style="position:absolute;left:1419px;top:599px;width:2px;height:722px;background:#e5e5eb;"></div>
<div style="position:absolute;left:1563px;top:599px;width:2px;height:722px;background:#e5e5eb;"></div>
<div style="position:absolute;left:1718px;top:599px;width:2px;height:722px;background:#e5e5eb;"></div>
<div style="position:absolute;left:1863px;top:599px;width:2px;height:722px;background:#e5e5eb;"></div>
<div style="position:absolute;left:2007px;top:599px;width:2px;height:722px;background:#e5e5eb;"></div>
<div style="position:absolute;left:2151px;top:599px;width:2px;height:722px;background:#e5e5eb;"></div>
<div style="position:absolute;left:2295px;top:599px;width:2px;height:722px;background:#e5e5eb;"></div>
<div style="position:absolute;left:657px;top:259px;width:2px;height:38px;background:#e5e5eb;"></div>
<div style="position:absolute;left:801px;top:259px;width:2px;height:38px;background:#e5e5eb;"></div>
<div style="position:absolute;left:991px;top:259px;width:2px;height:38px;background:#e5e5eb;"></div>
<div style="position:absolute;left:1131px;top:259px;width:2px;height:38px;background:#e5e5eb;"></div>
<div style="position:absolute;left:1275px;top:259px;width:2px;height:38px;background:#e5e5eb;"></div>
<div style="position:absolute;left:1419px;top:259px;width:2px;height:38px;background:#e5e5eb;"></div>
<div style="position:absolute;left:1563px;top:259px;width:2px;height:38px;background:#e5e5eb;"></div>
<div style="position:absolute;left:1718px;top:259px;width:2px;height:38px;background:#e5e5eb;"></div>
<div style="position:absolute;left:1863px;top:259px;width:2px;height:38px;background:#e5e5eb;"></div>
<div style="position:absolute;left:2007px;top:259px;width:2px;height:38px;background:#e5e5eb;"></div>
<div style="position:absolute;left:2151px;top:259px;width:2px;height:38px;background:#e5e5eb;"></div>
<div style="position:absolute;left:2295px;top:259px;width:2px;height:38px;background:#e5e5eb;"></div>
<div style="position:absolute;left:558px;top:296px;width:1825px;height:2px;background:#dfe1e5;"></div>
<div style="position:absolute;left:558px;top:384px;width:100px;height:2px;background:#e5e5eb;"></div>
<div style="position:absolute;left:558px;top:448px;width:100px;height:2px;background:#e5e5eb;"></div>
<div style="position:absolute;left:558px;top:498px;width:100px;height:2px;background:#e5e5eb;"></div>
<div style="position:absolute;left:558px;top:550px;width:100px;height:2px;background:#e5e5eb;"></div>
<div style="position:absolute;left:558px;top:598px;width:100px;height:2px;background:#e5e5eb;"></div>
<div style="position:absolute;left:657px;top:259px;width:2px;height:1062px;background:#e5e5eb;"></div>
<div style="position:absolute;left:801px;top:297px;width:2px;height:152px;background:rgba(200,212,228,0.9);"></div>
<div style="position:absolute;left:991px;top:297px;width:2px;height:152px;background:rgba(200,212,228,0.9);"></div>
<div style="position:absolute;left:1131px;top:297px;width:2px;height:152px;background:rgba(200,212,228,0.9);"></div>
<div style="position:absolute;left:1863px;top:297px;width:2px;height:152px;background:rgba(200,212,228,0.9);"></div>
<div style="position:absolute;left:1132px;top:384px;width:1251px;height:2px;background:rgba(200,212,228,0.9);"></div>
<div style="position:absolute;left:1275px;top:385px;width:2px;height:64px;background:rgba(200,212,228,0.9);"></div>
<div style="position:absolute;left:1419px;top:385px;width:2px;height:64px;background:rgba(200,212,228,0.9);"></div>
<div style="position:absolute;left:1563px;top:385px;width:2px;height:64px;background:rgba(200,212,228,0.9);"></div>
<div style="position:absolute;left:1718px;top:385px;width:2px;height:64px;background:rgba(200,212,228,0.9);"></div>
<div style="position:absolute;left:2007px;top:385px;width:2px;height:64px;background:rgba(200,212,228,0.9);"></div>
<div style="position:absolute;left:2151px;top:385px;width:2px;height:64px;background:rgba(200,212,228,0.9);"></div>
<div style="position:absolute;left:2295px;top:385px;width:2px;height:64px;background:rgba(200,212,228,0.9);"></div>
<div style="position:absolute;left:658px;top:448px;width:1725px;height:2px;background:rgba(180,208,226,0.95);"></div>
<div style="position:absolute;left:801px;top:449px;width:2px;height:50px;background:rgba(190,212,228,0.9);"></div>
<div style="position:absolute;left:991px;top:449px;width:2px;height:50px;background:rgba(190,212,228,0.9);"></div>
<div style="position:absolute;left:1131px;top:449px;width:2px;height:50px;background:rgba(190,212,228,0.9);"></div>
<div style="position:absolute;left:1275px;top:449px;width:2px;height:50px;background:rgba(190,212,228,0.9);"></div>
<div style="position:absolute;left:1419px;top:449px;width:2px;height:50px;background:rgba(190,212,228,0.9);"></div>
<div style="position:absolute;left:1563px;top:449px;width:2px;height:50px;background:rgba(190,212,228,0.9);"></div>
<div style="position:absolute;left:1718px;top:449px;width:2px;height:50px;background:rgba(190,212,228,0.9);"></div>
<div style="position:absolute;left:1863px;top:449px;width:2px;height:50px;background:rgba(190,212,228,0.9);"></div>
<div style="position:absolute;left:2007px;top:449px;width:2px;height:50px;background:rgba(190,212,228,0.9);"></div>
<div style="position:absolute;left:2151px;top:449px;width:2px;height:50px;background:rgba(190,212,228,0.9);"></div>
<div style="position:absolute;left:2295px;top:449px;width:2px;height:50px;background:rgba(190,212,228,0.9);"></div>
<div style="position:absolute;left:658px;top:498px;width:1725px;height:2px;background:rgba(190,210,222,0.9);"></div>
<div style="position:absolute;left:1131px;top:499px;width:2px;height:52px;background:rgba(200,220,234,0.8);"></div>
<div style="position:absolute;left:1131px;top:551px;width:2px;height:48px;background:rgba(190,214,228,0.75);"></div>
<div style="position:absolute;left:1275px;top:499px;width:2px;height:52px;background:rgba(200,220,234,0.8);"></div>
<div style="position:absolute;left:1275px;top:551px;width:2px;height:48px;background:rgba(190,214,228,0.75);"></div>
<div style="position:absolute;left:1419px;top:499px;width:2px;height:52px;background:rgba(200,220,234,0.8);"></div>
<div style="position:absolute;left:1419px;top:551px;width:2px;height:48px;background:rgba(190,214,228,0.75);"></div>
<div style="position:absolute;left:1563px;top:499px;width:2px;height:52px;background:rgba(200,220,234,0.8);"></div>
<div style="position:absolute;left:1563px;top:551px;width:2px;height:48px;background:rgba(190,214,228,0.75);"></div>
<div style="position:absolute;left:1718px;top:499px;width:2px;height:52px;background:rgba(200,220,234,0.8);"></div>
<div style="position:absolute;left:1718px;top:551px;width:2px;height:48px;background:rgba(190,214,228,0.75);"></div>
<div style="position:absolute;left:1863px;top:499px;width:2px;height:52px;background:rgba(200,220,234,0.8);"></div>
<div style="position:absolute;left:1863px;top:551px;width:2px;height:48px;background:rgba(190,214,228,0.75);"></div>
<div style="position:absolute;left:2007px;top:499px;width:2px;height:52px;background:rgba(200,220,234,0.8);"></div>
<div style="position:absolute;left:2007px;top:551px;width:2px;height:48px;background:rgba(190,214,228,0.75);"></div>
<div style="position:absolute;left:2151px;top:499px;width:2px;height:52px;background:rgba(200,220,234,0.8);"></div>
<div style="position:absolute;left:2151px;top:551px;width:2px;height:48px;background:rgba(190,214,228,0.75);"></div>
<div style="position:absolute;left:2295px;top:499px;width:2px;height:52px;background:rgba(200,220,234,0.8);"></div>
<div style="position:absolute;left:2295px;top:551px;width:2px;height:48px;background:rgba(190,214,228,0.75);"></div>
<div style="position:absolute;left:658px;top:550px;width:1725px;height:2px;background:rgba(190,215,225,0.9);"></div>
<div style="position:absolute;left:658px;top:598px;width:1725px;height:2px;background:rgba(190,215,225,0.9);"></div>
<div style="position:absolute;left:557px;top:258px;width:1827px;height:2px;background:#e2e3ea;"></div>
<div style="position:absolute;left:557px;top:258px;width:2px;height:1064px;background:#e2e3ea;"></div>
<div style="position:absolute;left:2382px;top:258px;width:2px;height:1064px;background:#e2e3ea;"></div>
<div style="position:absolute;left:557px;top:1320px;width:1827px;height:2px;background:#e2e3ea;"></div>
<svg style="position:absolute;left:627px;top:266px;" width="26" height="26" viewBox="0 0 26 26"><path d="M26 0 V26 H0 Z" fill="#bec0cc"/></svg>
<div style="position:absolute;left:658px;top:259px;width:144px;height:40px;line-height:40px;text-align:center;white-space:nowrap;overflow:hidden;font-size:24px;color:#4a4d57;-webkit-text-stroke:0.5px #4a4d57;">A(HR)</div>
<div style="position:absolute;left:802px;top:259px;width:190px;height:40px;line-height:40px;text-align:center;white-space:nowrap;overflow:hidden;font-size:24px;color:#4a4d57;-webkit-text-stroke:0.5px #4a4d57;">B(HR)</div>
<div style="position:absolute;left:992px;top:259px;width:140px;height:40px;line-height:40px;text-align:center;white-space:nowrap;overflow:hidden;font-size:24px;color:#4a4d57;-webkit-text-stroke:0.5px #4a4d57;">C(HR)</div>
<div style="position:absolute;left:1132px;top:259px;width:144px;height:40px;line-height:40px;text-align:center;white-space:nowrap;overflow:hidden;font-size:24px;color:#4a4d57;-webkit-text-stroke:0.5px #4a4d57;">D(HR)</div>
<div style="position:absolute;left:1276px;top:259px;width:144px;height:40px;line-height:40px;text-align:center;white-space:nowrap;overflow:hidden;font-size:24px;color:#4a4d57;-webkit-text-stroke:0.5px #4a4d57;">E(HR)</div>
<div style="position:absolute;left:1420px;top:259px;width:144px;height:40px;line-height:40px;text-align:center;white-space:nowrap;overflow:hidden;font-size:24px;color:#4a4d57;-webkit-text-stroke:0.5px #4a4d57;">F(HR)</div>
<div style="position:absolute;left:1564px;top:259px;width:155px;height:40px;line-height:40px;text-align:center;white-space:nowrap;overflow:hidden;font-size:24px;color:#4a4d57;-webkit-text-stroke:0.5px #4a4d57;">G(HR)</div>
<div style="position:absolute;left:1719px;top:259px;width:145px;height:40px;line-height:40px;text-align:center;white-space:nowrap;overflow:hidden;font-size:24px;color:#4a4d57;-webkit-text-stroke:0.5px #4a4d57;">H(HR)</div>
<div style="position:absolute;left:1864px;top:259px;width:144px;height:40px;line-height:40px;text-align:center;white-space:nowrap;overflow:hidden;font-size:24px;color:#4a4d57;-webkit-text-stroke:0.5px #4a4d57;">I</div>
<div style="position:absolute;left:2008px;top:259px;width:144px;height:40px;line-height:40px;text-align:center;white-space:nowrap;overflow:hidden;font-size:24px;color:#4a4d57;-webkit-text-stroke:0.5px #4a4d57;">J</div>
<div style="position:absolute;left:2152px;top:259px;width:144px;height:40px;line-height:40px;text-align:center;white-space:nowrap;overflow:hidden;font-size:24px;color:#4a4d57;-webkit-text-stroke:0.5px #4a4d57;">K</div>
<div style="position:absolute;left:2296px;top:259px;width:144px;height:40px;line-height:40px;text-align:center;white-space:nowrap;overflow:hidden;font-size:24px;color:#4a4d57;-webkit-text-stroke:0.5px #4a4d57;"></div>
<div style="position:absolute;left:2379px;top:271px;width:3px;height:17px;background:#4a4d57;"></div>
<div style="position:absolute;left:559px;top:298px;width:100px;height:88px;line-height:88px;text-align:center;white-space:nowrap;overflow:hidden;font-size:25px;color:#4a4d57;-webkit-text-stroke:0.3px #4a4d57;">1(H)</div>
<div style="position:absolute;left:559px;top:386px;width:100px;height:64px;line-height:64px;text-align:center;white-space:nowrap;overflow:hidden;font-size:25px;color:#4a4d57;-webkit-text-stroke:0.3px #4a4d57;">2(H)</div>
<div style="position:absolute;left:559px;top:450px;width:100px;height:50px;line-height:50px;text-align:center;white-space:nowrap;overflow:hidden;font-size:25px;color:#4a4d57;-webkit-text-stroke:0.3px #4a4d57;">3</div>
<div style="position:absolute;left:559px;top:500px;width:100px;height:52px;line-height:52px;text-align:center;white-space:nowrap;overflow:hidden;font-size:25px;color:#4a4d57;-webkit-text-stroke:0.3px #4a4d57;">4</div>
<div style="position:absolute;left:559px;top:552px;width:100px;height:48px;line-height:48px;text-align:center;white-space:nowrap;overflow:hidden;font-size:25px;color:#4a4d57;-webkit-text-stroke:0.3px #4a4d57;">5</div>
<div style="position:absolute;left:559px;top:600px;width:100px;height:38px;line-height:38px;text-align:center;white-space:nowrap;overflow:hidden;font-size:25px;color:#4a4d57;-webkit-text-stroke:0.3px #4a4d57;">6</div>
<div style="position:absolute;left:559px;top:638px;width:100px;height:38px;line-height:38px;text-align:center;white-space:nowrap;overflow:hidden;font-size:25px;color:#4a4d57;-webkit-text-stroke:0.3px #4a4d57;">7</div>
<div style="position:absolute;left:559px;top:676px;width:100px;height:38px;line-height:38px;text-align:center;white-space:nowrap;overflow:hidden;font-size:25px;color:#4a4d57;-webkit-text-stroke:0.3px #4a4d57;">8</div>
<div style="position:absolute;left:559px;top:714px;width:100px;height:38px;line-height:38px;text-align:center;white-space:nowrap;overflow:hidden;font-size:25px;color:#4a4d57;-webkit-text-stroke:0.3px #4a4d57;">9</div>
<div style="position:absolute;left:559px;top:752px;width:100px;height:38px;line-height:38px;text-align:center;white-space:nowrap;overflow:hidden;font-size:25px;color:#4a4d57;-webkit-text-stroke:0.3px #4a4d57;">10</div>
<div style="position:absolute;left:559px;top:790px;width:100px;height:38px;line-height:38px;text-align:center;white-space:nowrap;overflow:hidden;font-size:25px;color:#4a4d57;-webkit-text-stroke:0.3px #4a4d57;">11</div>
<div style="position:absolute;left:559px;top:828px;width:100px;height:38px;line-height:38px;text-align:center;white-space:nowrap;overflow:hidden;font-size:25px;color:#4a4d57;-webkit-text-stroke:0.3px #4a4d57;">12</div>
<div style="position:absolute;left:559px;top:866px;width:100px;height:38px;line-height:38px;text-align:center;white-space:nowrap;overflow:hidden;font-size:25px;color:#4a4d57;-webkit-text-stroke:0.3px #4a4d57;">13</div>
<div style="position:absolute;left:559px;top:904px;width:100px;height:38px;line-height:38px;text-align:center;white-space:nowrap;overflow:hidden;font-size:25px;color:#4a4d57;-webkit-text-stroke:0.3px #4a4d57;">14</div>
<div style="position:absolute;left:559px;top:942px;width:100px;height:38px;line-height:38px;text-align:center;white-space:nowrap;overflow:hidden;font-size:25px;color:#4a4d57;-webkit-text-stroke:0.3px #4a4d57;">15</div>
<div style="position:absolute;left:559px;top:980px;width:100px;height:38px;line-height:38px;text-align:center;white-space:nowrap;overflow:hidden;font-size:25px;color:#4a4d57;-webkit-text-stroke:0.3px #4a4d57;">16</div>
<div style="position:absolute;left:559px;top:1018px;width:100px;height:38px;line-height:38px;text-align:center;white-space:nowrap;overflow:hidden;font-size:25px;color:#4a4d57;-webkit-text-stroke:0.3px #4a4d57;">17</div>
<div style="position:absolute;left:559px;top:1056px;width:100px;height:38px;line-height:38px;text-align:center;white-space:nowrap;overflow:hidden;font-size:25px;color:#4a4d57;-webkit-text-stroke:0.3px #4a4d57;">18</div>
<div style="position:absolute;left:559px;top:1094px;width:100px;height:38px;line-height:38px;text-align:center;white-space:nowrap;overflow:hidden;font-size:25px;color:#4a4d57;-webkit-text-stroke:0.3px #4a4d57;">19</div>
<div style="position:absolute;left:559px;top:1132px;width:100px;height:38px;line-height:38px;text-align:center;white-space:nowrap;overflow:hidden;font-size:25px;color:#4a4d57;-webkit-text-stroke:0.3px #4a4d57;">20</div>
<div style="position:absolute;left:559px;top:1170px;width:100px;height:38px;line-height:38px;text-align:center;white-space:nowrap;overflow:hidden;font-size:25px;color:#4a4d57;-webkit-text-stroke:0.3px #4a4d57;">21</div>
<div style="position:absolute;left:559px;top:1208px;width:100px;height:38px;line-height:38px;text-align:center;white-space:nowrap;overflow:hidden;font-size:25px;color:#4a4d57;-webkit-text-stroke:0.3px #4a4d57;">22</div>
<div style="position:absolute;left:559px;top:1246px;width:100px;height:38px;line-height:38px;text-align:center;white-space:nowrap;overflow:hidden;font-size:25px;color:#4a4d57;-webkit-text-stroke:0.3px #4a4d57;">23</div>
<div style="position:absolute;left:559px;top:1284px;width:100px;height:38px;line-height:38px;text-align:center;white-space:nowrap;overflow:hidden;font-size:25px;color:#4a4d57;-webkit-text-stroke:0.3px #4a4d57;">24</div>
<div style="position:absolute;left:658px;top:297px;width:144px;height:152px;line-height:152px;text-align:center;white-space:nowrap;overflow:hidden;font-size:28px;font-weight:bold;color:#fff;">商品类别</div>
<div style="position:absolute;left:802px;top:297px;width:190px;height:152px;line-height:152px;text-align:center;white-space:nowrap;overflow:hidden;font-size:28px;font-weight:bold;color:#fff;">商品名称</div>
<div style="position:absolute;left:992px;top:297px;width:140px;height:152px;line-height:152px;text-align:center;white-space:nowrap;overflow:hidden;font-size:28px;font-weight:bold;color:#fff;">门店名称</div>
<div style="position:absolute;left:1132px;top:297px;width:732px;height:88px;line-height:88px;text-align:center;white-space:nowrap;overflow:hidden;font-size:28px;font-weight:bold;color:#fff;">当年销售合计</div>
<div style="position:absolute;left:2100px;top:297px;width:318px;height:88px;line-height:88px;text-align:center;white-space:nowrap;overflow:hidden;font-size:28px;font-weight:bold;color:#fff;">G(年月)</div>
<div style="position:absolute;left:1132px;top:385px;width:144px;height:64px;line-height:64px;text-align:center;white-space:nowrap;font-size:28px;font-weight:bold;color:#fff;">数量</div>
<div style="position:absolute;left:1276px;top:385px;width:144px;height:64px;line-height:64px;text-align:center;white-space:nowrap;font-size:28px;font-weight:bold;color:#fff;">销售额</div>
<div style="position:absolute;left:1420px;top:385px;width:144px;height:64px;line-height:64px;text-align:center;white-space:nowrap;font-size:28px;font-weight:bold;color:#fff;">成本额</div>
<div style="position:absolute;left:1564px;top:385px;width:155px;height:64px;line-height:64px;text-align:center;white-space:nowrap;font-size:28px;font-weight:bold;color:#fff;">销售额占比</div>
<div style="position:absolute;left:1719px;top:385px;width:145px;height:64px;line-height:64px;text-align:center;white-space:nowrap;font-size:28px;font-weight:bold;color:#fff;">利润率</div>
<div style="position:absolute;left:1864px;top:385px;width:144px;height:64px;line-height:64px;text-align:center;white-space:nowrap;font-size:28px;font-weight:bold;color:#fff;">数量</div>
<div style="position:absolute;left:2008px;top:385px;width:144px;height:64px;line-height:64px;text-align:center;white-space:nowrap;font-size:28px;font-weight:bold;color:#fff;">销售额</div>
<div style="position:absolute;left:2152px;top:385px;width:144px;height:64px;line-height:64px;text-align:center;white-space:nowrap;font-size:28px;font-weight:bold;color:#fff;">成本额</div>
<div style="position:absolute;left:2296px;top:385px;width:87px;height:64px;line-height:64px;white-space:nowrap;overflow:hidden;padding-left:21px;font-size:28px;font-weight:bold;color:#fff;">销售额</div>
<div style="position:absolute;left:658px;top:449px;width:144px;height:50px;line-height:50px;text-align:center;white-space:nowrap;overflow:hidden;font-size:24px;color:#151a3c;">G(商品类别)</div>
<div style="position:absolute;left:802px;top:449px;width:190px;height:50px;line-height:50px;text-align:center;white-space:nowrap;overflow:hidden;font-size:24px;color:#151a3c;">G(商品名称)</div>
<div style="position:absolute;left:992px;top:449px;width:140px;height:50px;line-height:50px;text-align:center;white-space:nowrap;overflow:hidden;font-size:24px;color:#151a3c;">G(门店名称)</div>
<div style="position:absolute;left:1132px;top:449px;width:144px;height:50px;line-height:50px;text-align:center;white-space:nowrap;overflow:hidden;font-size:24px;color:#151a3c;">=sum(I3)</div>
<div style="position:absolute;left:1276px;top:449px;width:144px;height:50px;line-height:50px;text-align:center;white-space:nowrap;overflow:hidden;font-size:24px;color:#151a3c;">=sum(J3)</div>
<div style="position:absolute;left:1420px;top:449px;width:144px;height:50px;line-height:50px;text-align:center;white-space:nowrap;overflow:hidden;font-size:24px;color:#151a3c;">=sum(K3)</div>
<div style="position:absolute;left:1564px;top:449px;width:155px;height:50px;line-height:50px;text-align:center;white-space:nowrap;overflow:hidden;font-size:24px;color:#151a3c;">=E3/E4</div>
<div style="position:absolute;left:1719px;top:449px;width:145px;height:50px;line-height:50px;text-align:center;white-space:nowrap;overflow:hidden;font-size:24px;color:#151a3c;">=(E3-F3)/E3</div>
<div style="position:absolute;left:1864px;top:449px;width:144px;height:50px;line-height:50px;text-align:center;white-space:nowrap;overflow:hidden;font-size:24px;color:#151a3c;">G(数量)</div>
<div style="position:absolute;left:2008px;top:449px;width:144px;height:50px;line-height:50px;text-align:center;white-space:nowrap;overflow:hidden;font-size:24px;color:#151a3c;">G(销售额)</div>
<div style="position:absolute;left:2152px;top:449px;width:144px;height:50px;line-height:50px;text-align:center;white-space:nowrap;overflow:hidden;font-size:24px;color:#151a3c;">G(成本额)</div>
<div style="position:absolute;left:2296px;top:449px;width:87px;height:50px;line-height:50px;text-align:left;white-space:nowrap;overflow:hidden;font-size:24px;padding-left:14px;color:#151a3c;">G(销售额)</div>
<div style="position:absolute;left:658px;top:499px;width:474px;height:52px;line-height:52px;text-align:center;white-space:nowrap;overflow:hidden;font-size:24px;font-weight:bold;color:#151a3c;">小计</div>
<div style="position:absolute;left:658px;top:551px;width:474px;height:48px;line-height:48px;text-align:center;white-space:nowrap;overflow:hidden;font-size:24px;font-weight:bold;color:#151a3c;">合计</div>
<div style="position:absolute;left:1132px;top:499px;width:144px;height:52px;line-height:52px;text-align:center;white-space:nowrap;overflow:hidden;font-size:24px;font-weight:bold;color:#151a3c;">=sum(D3)</div>
<div style="position:absolute;left:1132px;top:551px;width:144px;height:48px;line-height:48px;text-align:center;white-space:nowrap;overflow:hidden;font-size:24px;font-weight:bold;color:#151a3c;">=sum(D3)</div>
<div style="position:absolute;left:1276px;top:499px;width:144px;height:52px;line-height:52px;text-align:center;white-space:nowrap;overflow:hidden;font-size:24px;font-weight:bold;color:#151a3c;">=sum(E3)</div>
<div style="position:absolute;left:1276px;top:551px;width:144px;height:48px;line-height:48px;text-align:center;white-space:nowrap;overflow:hidden;font-size:24px;font-weight:bold;color:#151a3c;">=sum(E3)</div>
<div style="position:absolute;left:1420px;top:499px;width:144px;height:52px;line-height:52px;text-align:center;white-space:nowrap;overflow:hidden;font-size:24px;font-weight:bold;color:#151a3c;">=sum(F3)</div>
<div style="position:absolute;left:1420px;top:551px;width:144px;height:48px;line-height:48px;text-align:center;white-space:nowrap;overflow:hidden;font-size:24px;font-weight:bold;color:#151a3c;">=sum(F3)</div>
<div style="position:absolute;left:1564px;top:499px;width:155px;height:52px;line-height:52px;text-align:center;white-space:nowrap;overflow:hidden;font-size:24px;font-weight:bold;color:#151a3c;">=E4/E5</div>
<div style="position:absolute;left:1564px;top:551px;width:155px;height:48px;line-height:48px;text-align:center;white-space:nowrap;overflow:hidden;font-size:24px;font-weight:bold;color:#151a3c;">=1</div>
<div style="position:absolute;left:1719px;top:499px;width:145px;height:52px;line-height:52px;text-align:center;white-space:nowrap;overflow:hidden;font-size:24px;font-weight:bold;color:#151a3c;">=(E4-F4)/E4</div>
<div style="position:absolute;left:1719px;top:551px;width:145px;height:48px;line-height:48px;text-align:center;white-space:nowrap;overflow:hidden;font-size:24px;font-weight:bold;color:#151a3c;">=(E5-F5)/E5</div>
<div style="position:absolute;left:1864px;top:499px;width:144px;height:52px;line-height:52px;text-align:center;white-space:nowrap;overflow:hidden;font-size:24px;font-weight:bold;color:#151a3c;">=sum(I3)</div>
<div style="position:absolute;left:1864px;top:551px;width:144px;height:48px;line-height:48px;text-align:center;white-space:nowrap;overflow:hidden;font-size:24px;font-weight:bold;color:#151a3c;">=sum(I3)</div>
<div style="position:absolute;left:2008px;top:499px;width:144px;height:52px;line-height:52px;text-align:center;white-space:nowrap;overflow:hidden;font-size:24px;font-weight:bold;color:#151a3c;">=sum(J3)</div>
<div style="position:absolute;left:2008px;top:551px;width:144px;height:48px;line-height:48px;text-align:center;white-space:nowrap;overflow:hidden;font-size:24px;font-weight:bold;color:#151a3c;">=sum(J3)</div>
<div style="position:absolute;left:2152px;top:499px;width:144px;height:52px;line-height:52px;text-align:center;white-space:nowrap;overflow:hidden;font-size:24px;font-weight:bold;color:#151a3c;">=sum(K3)</div>
<div style="position:absolute;left:2152px;top:551px;width:144px;height:48px;line-height:48px;text-align:center;white-space:nowrap;overflow:hidden;font-size:24px;font-weight:bold;color:#151a3c;">=sum(K3)</div>
<div style="position:absolute;left:2296px;top:499px;width:87px;height:52px;line-height:52px;text-align:left;white-space:nowrap;overflow:hidden;font-size:24px;font-weight:bold;padding-left:52px;color:#151a3c;">=J4</div>
<div style="position:absolute;left:2296px;top:551px;width:87px;height:48px;line-height:48px;text-align:left;white-space:nowrap;overflow:hidden;font-size:24px;font-weight:bold;padding-left:72px;color:#151a3c;">=</div>
<svg style="position:absolute;left:1133px;top:450px;" width="12" height="12" viewBox="0 0 12 12"><path d="M0 0 H12 L0 12 Z" fill="#e8302a"/></svg>
<svg style="position:absolute;left:1133px;top:500px;" width="12" height="12" viewBox="0 0 12 12"><path d="M0 0 H12 L0 12 Z" fill="#e8302a"/></svg>
<svg style="position:absolute;left:1133px;top:552px;" width="12" height="12" viewBox="0 0 12 12"><path d="M0 0 H12 L0 12 Z" fill="#e8302a"/></svg>
<svg style="position:absolute;left:1277px;top:450px;" width="12" height="12" viewBox="0 0 12 12"><path d="M0 0 H12 L0 12 Z" fill="#e8302a"/></svg>
<svg style="position:absolute;left:1277px;top:500px;" width="12" height="12" viewBox="0 0 12 12"><path d="M0 0 H12 L0 12 Z" fill="#e8302a"/></svg>
<svg style="position:absolute;left:1277px;top:552px;" width="12" height="12" viewBox="0 0 12 12"><path d="M0 0 H12 L0 12 Z" fill="#e8302a"/></svg>
<svg style="position:absolute;left:1421px;top:450px;" width="12" height="12" viewBox="0 0 12 12"><path d="M0 0 H12 L0 12 Z" fill="#e8302a"/></svg>
<svg style="position:absolute;left:1421px;top:500px;" width="12" height="12" viewBox="0 0 12 12"><path d="M0 0 H12 L0 12 Z" fill="#e8302a"/></svg>
<svg style="position:absolute;left:1421px;top:552px;" width="12" height="12" viewBox="0 0 12 12"><path d="M0 0 H12 L0 12 Z" fill="#e8302a"/></svg>
<svg style="position:absolute;left:1565px;top:450px;" width="12" height="12" viewBox="0 0 12 12"><path d="M0 0 H12 L0 12 Z" fill="#e8302a"/></svg>
<svg style="position:absolute;left:1565px;top:500px;" width="12" height="12" viewBox="0 0 12 12"><path d="M0 0 H12 L0 12 Z" fill="#e8302a"/></svg>
<svg style="position:absolute;left:1565px;top:552px;" width="12" height="12" viewBox="0 0 12 12"><path d="M0 0 H12 L0 12 Z" fill="#e8302a"/></svg>
<svg style="position:absolute;left:1720px;top:450px;" width="12" height="12" viewBox="0 0 12 12"><path d="M0 0 H12 L0 12 Z" fill="#e8302a"/></svg>
<svg style="position:absolute;left:1720px;top:500px;" width="12" height="12" viewBox="0 0 12 12"><path d="M0 0 H12 L0 12 Z" fill="#e8302a"/></svg>
<svg style="position:absolute;left:1720px;top:552px;" width="12" height="12" viewBox="0 0 12 12"><path d="M0 0 H12 L0 12 Z" fill="#e8302a"/></svg>
<svg style="position:absolute;left:1865px;top:450px;" width="12" height="12" viewBox="0 0 12 12"><path d="M0 0 H12 L0 12 Z" fill="#e8302a"/></svg>
<svg style="position:absolute;left:1865px;top:500px;" width="12" height="12" viewBox="0 0 12 12"><path d="M0 0 H12 L0 12 Z" fill="#e8302a"/></svg>
<svg style="position:absolute;left:1865px;top:552px;" width="12" height="12" viewBox="0 0 12 12"><path d="M0 0 H12 L0 12 Z" fill="#e8302a"/></svg>
<svg style="position:absolute;left:2009px;top:450px;" width="12" height="12" viewBox="0 0 12 12"><path d="M0 0 H12 L0 12 Z" fill="#e8302a"/></svg>
<svg style="position:absolute;left:2009px;top:500px;" width="12" height="12" viewBox="0 0 12 12"><path d="M0 0 H12 L0 12 Z" fill="#e8302a"/></svg>
<svg style="position:absolute;left:2009px;top:552px;" width="12" height="12" viewBox="0 0 12 12"><path d="M0 0 H12 L0 12 Z" fill="#e8302a"/></svg>
<svg style="position:absolute;left:2153px;top:450px;" width="12" height="12" viewBox="0 0 12 12"><path d="M0 0 H12 L0 12 Z" fill="#e8302a"/></svg>
<svg style="position:absolute;left:2153px;top:500px;" width="12" height="12" viewBox="0 0 12 12"><path d="M0 0 H12 L0 12 Z" fill="#e8302a"/></svg>
<svg style="position:absolute;left:2153px;top:552px;" width="12" height="12" viewBox="0 0 12 12"><path d="M0 0 H12 L0 12 Z" fill="#e8302a"/></svg>
<svg style="position:absolute;left:2297px;top:450px;" width="12" height="12" viewBox="0 0 12 12"><path d="M0 0 H12 L0 12 Z" fill="#e8302a"/></svg>
<svg style="position:absolute;left:2297px;top:500px;" width="12" height="12" viewBox="0 0 12 12"><path d="M0 0 H12 L0 12 Z" fill="#e8302a"/></svg>
<svg style="position:absolute;left:2297px;top:552px;" width="12" height="12" viewBox="0 0 12 12"><path d="M0 0 H12 L0 12 Z" fill="#e8302a"/></svg>
<svg style="position:absolute;left:659px;top:455px;" width="11" height="22" viewBox="0 0 11 22"><path d="M5.5 0 V19.5" stroke="#f27a70" stroke-width="1.4"/><path d="M1 12 L5.5 20 L10 12" fill="none" stroke="#ee5247" stroke-width="1.3"/></svg>
<svg style="position:absolute;left:803px;top:455px;" width="11" height="22" viewBox="0 0 11 22"><path d="M5.5 0 V19.5" stroke="#f27a70" stroke-width="1.4"/><path d="M1 12 L5.5 20 L10 12" fill="none" stroke="#ee5247" stroke-width="1.3"/></svg>
<svg style="position:absolute;left:993px;top:455px;" width="11" height="22" viewBox="0 0 11 22"><path d="M5.5 0 V19.5" stroke="#f27a70" stroke-width="1.4"/><path d="M1 12 L5.5 20 L10 12" fill="none" stroke="#ee5247" stroke-width="1.3"/></svg>
<svg style="position:absolute;left:1865px;top:455px;" width="11" height="22" viewBox="0 0 11 22"><path d="M5.5 0 V19.5" stroke="#f27a70" stroke-width="1.4"/><path d="M1 12 L5.5 20 L10 12" fill="none" stroke="#ee5247" stroke-width="1.3"/></svg>
<svg style="position:absolute;left:2009px;top:455px;" width="11" height="22" viewBox="0 0 11 22"><path d="M5.5 0 V19.5" stroke="#f27a70" stroke-width="1.4"/><path d="M1 12 L5.5 20 L10 12" fill="none" stroke="#ee5247" stroke-width="1.3"/></svg>
<svg style="position:absolute;left:2153px;top:455px;" width="11" height="22" viewBox="0 0 11 22"><path d="M5.5 0 V19.5" stroke="#f27a70" stroke-width="1.4"/><path d="M1 12 L5.5 20 L10 12" fill="none" stroke="#ee5247" stroke-width="1.3"/></svg>
<svg style="position:absolute;left:2297px;top:455px;" width="11" height="22" viewBox="0 0 11 22"><path d="M5.5 0 V19.5" stroke="#f27a70" stroke-width="1.4"/><path d="M1 12 L5.5 20 L10 12" fill="none" stroke="#ee5247" stroke-width="1.3"/></svg>
<svg style="position:absolute;left:1870px;top:298px;" width="22" height="10" viewBox="0 0 22 10"><path d="M0 5 H20 M15 1 L20.5 5 L15 9" fill="none" stroke="#d9473d" stroke-width="1.6"/></svg>
<div style="position:absolute;left:655px;top:294px;width:152px;height:160px;border:4px solid #4eaabc;"></div>
<div style="position:absolute;left:803px;top:450px;width:7px;height:7px;background:#5b8cf7;border:1px solid #fff;"></div>
<div style="position:absolute;left:659px;top:1306px;width:665px;height:12px;background:rgba(40,40,70,0.1);border-radius:6px;"></div>
<div style="position:absolute;left:2370px;top:298px;width:12px;height:884px;background:rgba(40,40,70,0.1);border-radius:6px;"></div>
<svg style="position:absolute;left:568px;top:1344px;" width="26" height="28" viewBox="0 0 26 28"><path d="M24 1.5 L2 14 L8.5 17 L11 26 L15 20 L22.5 24 Z M8.5 17 L24 1.5 M15 20 L11 26" fill="none" stroke="#3d4367" stroke-width="2.6" stroke-linejoin="round"/></svg>
<svg style="position:absolute;left:2098px;top:1345px;" width="28" height="28" viewBox="0 0 28 28"><circle cx="12" cy="12" r="10" fill="none" stroke="#000" stroke-width="2.8"/><path d="M7 12 H17" stroke="#000" stroke-width="2.8"/><path d="M19 19 L26 26" stroke="#000" stroke-width="3"/></svg>
<div style="position:absolute;left:2144px;top:1326px;width:176px;height:74px;background:#fff;border:2px solid #e4e4ec;border-radius:5px;"></div>
<div style="position:absolute;left:2162px;top:1336px;width:100px;height:46px;line-height:46px;text-align:left;white-space:nowrap;overflow:hidden;font-size:28px;color:#272d52;">100%</div>
<svg style="position:absolute;left:2270px;top:1350px;" width="25" height="15" viewBox="0 0 25 15"><path d="M1.5 1.5 L12 12 L22.5 1.5" fill="none" stroke="#3d4367" stroke-width="2.5"/></svg>
<svg style="position:absolute;left:2338px;top:1345px;" width="28" height="28" viewBox="0 0 28 28"><circle cx="12" cy="12" r="10" fill="none" stroke="#000" stroke-width="2.8"/><path d="M7 12 H17 M12 7 V17" stroke="#000" stroke-width="2.8"/><path d="M19 19 L26 26" stroke="#000" stroke-width="3"/></svg>
<div style="position:absolute;left:2408px;top:234px;width:2px;height:1150px;background:#e6e8ee;"></div>
<div style="position:absolute;left:2410px;top:234px;width:76px;height:1150px;background:#f8f9fb;"></div>
<div style="position:absolute;left:2486px;top:234px;width:2px;height:1150px;background:#e6e8ee;"></div>
<div style="position:absolute;left:2410px;top:338px;width:76px;height:75px;background:#eaf3f6;"></div>
<svg style="position:absolute;left:2437px;top:279px;" width="24" height="23" viewBox="0 0 24 23"><path d="M11 2 L2.5 11 L11 20 M21 2 L12.5 11 L21 20" fill="none" stroke="#2a2f55" stroke-width="2.8"/></svg>
<svg style="position:absolute;left:2435px;top:363px;" width="26" height="26" viewBox="0 0 26 26"><rect x="0.5" y="0" width="25" height="25.5" fill="#4ba8ba"/><rect x="2.7" y="2.5" width="13.3" height="13.5" fill="#84cbd6"/><rect x="18.5" y="3" width="4.5" height="4.5" fill="#dcf0f3"/><rect x="18.5" y="10" width="4.5" height="5.8" fill="#dcf0f3"/><rect x="3" y="18" width="4.7" height="4.8" fill="#dcf0f3"/><rect x="10" y="18" width="6" height="4.8" fill="#dcf0f3"/><rect x="18.5" y="18" width="4.5" height="4.8" fill="#dcf0f3"/></svg>
<svg style="position:absolute;left:2435px;top:463px;" width="28" height="28" viewBox="0 0 28 28"><path d="M11.5 25.3 H1.2 V1.2 H24.3 V10 M12 1.2 V10 M1.2 11.5 H12" fill="none" stroke="#3d4367" stroke-width="2.4"/><circle cx="18.5" cy="18.3" r="7.2" fill="#f8f9fb" stroke="#3d4367" stroke-width="2.4"/><rect x="17.4" y="14" width="2.2" height="2.2" fill="#3d4367"/><rect x="17.4" y="17.4" width="2.2" height="5.6" fill="#3d4367"/></svg>
<svg style="position:absolute;left:2434px;top:563px;" width="28" height="26" viewBox="0 0 28 26"><rect x="8.5" y="2.3" width="14.5" height="8.2" fill="none" stroke="#3d4367" stroke-width="2.4"/><rect x="8.5" y="14.2" width="17.2" height="9.8" fill="none" stroke="#3d4367" stroke-width="2.4"/><path d="M8.5 5.8 H2.2 V19.4 H8.5" fill="none" stroke="#3d4367" stroke-width="2.4"/></svg>
<div style="position:absolute;left:2488px;top:234px;width:352px;height:1150px;background:#f2f3f7;"></div>
<div style="position:absolute;left:2692px;top:253px;width:60px;height:44px;line-height:44px;text-align:left;white-space:nowrap;overflow:hidden;font-size:28px;color:#4ba8ba;">说明</div>
<div style="position:absolute;left:2763px;top:258px;width:2px;height:32px;background:#dde0e6;"></div>
<div style="position:absolute;left:2777px;top:253px;width:70px;height:44px;line-height:44px;text-align:left;white-space:nowrap;overflow:hidden;font-size:28px;color:#4ba8ba;">批量</div>
<div style="position:absolute;left:2547px;top:344px;width:2px;height:690px;background:#4ba8ba;"></div>
<div style="position:absolute;left:2548px;top:314px;width:270px;height:60px;background:#fff;border-radius:4px;"></div>
<div style="position:absolute;left:2518px;top:314px;width:60px;height:60px;background:#d9ecf1;border-radius:50%;"></div>
<svg style="position:absolute;left:2533px;top:329px;" width="30" height="30" viewBox="0 0 30 30"><circle cx="15" cy="15" r="9.6" fill="none" stroke="#4ba8ba" stroke-width="2.9"/><path d="M1.2 15 H10.2 M28.8 15 H19.8 M15 1.6 V10 M15 28.4 V20" stroke="#4ba8ba" stroke-width="2.8"/></svg>
<div style="position:absolute;left:2601px;top:323px;width:170px;height:44px;line-height:44px;text-align:left;white-space:nowrap;overflow:hidden;font-size:28px;color:#2c3356;">来源表</div>
<div style="position:absolute;left:2785px;top:333px;width:5px;height:5px;background:#2c3356;border-radius:1px;"></div>
<div style="position:absolute;left:2785px;top:342px;width:5px;height:5px;background:#2c3356;border-radius:1px;"></div>
<div style="position:absolute;left:2785px;top:351px;width:5px;height:5px;background:#2c3356;border-radius:1px;"></div>
<div style="position:absolute;left:2548px;top:434px;width:270px;height:60px;background:#fff;border-radius:4px;"></div>
<div style="position:absolute;left:2518px;top:434px;width:60px;height:60px;background:#d9ecf1;border-radius:50%;"></div>
<svg style="position:absolute;left:2534px;top:451px;" width="28" height="26" viewBox="0 0 28 26"><path d="M2.5 3 H19.5 L13.7 10.5 V25 M2.5 3 L8.3 10.5 V21" fill="none" stroke="#4ba8ba" stroke-width="2.7"/><path d="M18 14 H26.5 M18 19.8 H26.5" stroke="#4ba8ba" stroke-width="2.6"/></svg>
<div style="position:absolute;left:2601px;top:443px;width:170px;height:44px;line-height:44px;text-align:left;white-space:nowrap;overflow:hidden;font-size:28px;color:#2c3356;">筛选</div>
<div style="position:absolute;left:2785px;top:453px;width:5px;height:5px;background:#2c3356;border-radius:1px;"></div>
<div style="position:absolute;left:2785px;top:462px;width:5px;height:5px;background:#2c3356;border-radius:1px;"></div>
<div style="position:absolute;left:2785px;top:471px;width:5px;height:5px;background:#2c3356;border-radius:1px;"></div>
<div style="position:absolute;left:2548px;top:554px;width:270px;height:60px;background:#fff;border-radius:4px;"></div>
<div style="position:absolute;left:2518px;top:554px;width:60px;height:60px;background:#d9ecf1;border-radius:50%;"></div>
<svg style="position:absolute;left:2534px;top:572px;" width="28" height="24" viewBox="0 0 28 24"><rect x="7.7" y="1.4" width="12.4" height="4.1" fill="#4ba8ba"/><rect x="12.5" y="5" width="2.5" height="6" fill="#4ba8ba"/><rect x="5" y="10.9" width="17.6" height="2.7" fill="#4ba8ba"/><rect x="5" y="13" width="2.5" height="5.5" fill="#4ba8ba"/><rect x="20.1" y="13" width="2.5" height="5.5" fill="#4ba8ba"/><rect x="1.6" y="18.3" width="10.1" height="4.4" fill="#4ba8ba"/><rect x="16.5" y="18.3" width="10.1" height="4.4" fill="#4ba8ba"/></svg>
<div style="position:absolute;left:2601px;top:563px;width:170px;height:44px;line-height:44px;text-align:left;white-space:nowrap;overflow:hidden;font-size:28px;color:#2c3356;">分类汇总</div>
<div style="position:absolute;left:2785px;top:573px;width:5px;height:5px;background:#2c3356;border-radius:1px;"></div>
<div style="position:absolute;left:2785px;top:582px;width:5px;height:5px;background:#2c3356;border-radius:1px;"></div>
<div style="position:absolute;left:2785px;top:591px;width:5px;height:5px;background:#2c3356;border-radius:1px;"></div>
<div style="position:absolute;left:2548px;top:674px;width:270px;height:60px;background:#fff;border-radius:4px;"></div>
<div style="position:absolute;left:2518px;top:674px;width:60px;height:60px;background:#d9ecf1;border-radius:50%;"></div>
<svg style="position:absolute;left:2533px;top:689px;" width="30" height="30" viewBox="0 0 30 30"><path d="M14 3.5 A11.5 11.5 0 1 0 26.5 16" fill="none" stroke="#4ba8ba" stroke-width="2.7"/><path d="M16.5 2.5 V13.5 H27.5 A11 11 0 0 0 16.5 2.5 Z" fill="none" stroke="#4ba8ba" stroke-width="2.5"/></svg>
<div style="position:absolute;left:2601px;top:683px;width:170px;height:44px;line-height:44px;text-align:left;white-space:nowrap;overflow:hidden;font-size:28px;color:#2c3356;">占比</div>
<div style="position:absolute;left:2785px;top:693px;width:5px;height:5px;background:#2c3356;border-radius:1px;"></div>
<div style="position:absolute;left:2785px;top:702px;width:5px;height:5px;background:#2c3356;border-radius:1px;"></div>
<div style="position:absolute;left:2785px;top:711px;width:5px;height:5px;background:#2c3356;border-radius:1px;"></div>
<div style="position:absolute;left:2548px;top:794px;width:270px;height:60px;background:#fff;border-radius:4px;"></div>
<div style="position:absolute;left:2518px;top:794px;width:60px;height:60px;background:#d9ecf1;border-radius:50%;"></div>
<svg style="position:absolute;left:2533px;top:809px;" width="30" height="30" viewBox="0 0 30 30"><path d="M19.5 3.5 C16 2.5 14 4 13 8 L9.5 24 C8.5 27 6.5 27.5 4 27" fill="none" stroke="#4ba8ba" stroke-width="3"/><path d="M6 11 H18" stroke="#4ba8ba" stroke-width="2.8"/><path d="M13 10.5 L25.5 22.5 M25.5 10.5 L13 22.5" stroke="#4ba8ba" stroke-width="3"/></svg>
<div style="position:absolute;left:2601px;top:803px;width:170px;height:44px;line-height:44px;text-align:left;white-space:nowrap;overflow:hidden;font-size:28px;color:#2c3356;">计算字段</div>
<div style="position:absolute;left:2785px;top:813px;width:5px;height:5px;background:#2c3356;border-radius:1px;"></div>
<div style="position:absolute;left:2785px;top:822px;width:5px;height:5px;background:#2c3356;border-radius:1px;"></div>
<div style="position:absolute;left:2785px;top:831px;width:5px;height:5px;background:#2c3356;border-radius:1px;"></div>
<div style="position:absolute;left:2518px;top:914px;width:60px;height:60px;background:#4ba8ba;border-radius:50%;"></div>
<svg style="position:absolute;left:2535px;top:931px;" width="26" height="26" viewBox="0 0 26 26"><path d="M13 2 V24 M2 13 H24" stroke="#fff" stroke-width="3.6"/></svg>
<div style="position:absolute;left:2518px;top:1034px;width:300px;height:60px;border:2px solid #4ba8ba;border-radius:4px;background:#ffffff;"></div>
<div style="position:absolute;left:2524px;top:1040px;width:288px;height:48px;background:#4ba8ba;border-radius:3px;"></div>
<svg style="position:absolute;left:2535px;top:1052px;" width="26" height="24" viewBox="0 0 26 24"><rect x="0.4" y="1" width="25.3" height="4.6" fill="#fff"/><rect x="0.4" y="8" width="5.6" height="15" fill="#fff"/><rect x="8" y="8" width="17.7" height="4" fill="#fff"/><rect x="8" y="14" width="8.8" height="3.6" fill="#fff"/><rect x="8" y="19.5" width="17.7" height="3.5" fill="#fff"/></svg>
<div style="position:absolute;left:2590px;top:1042px;width:220px;height:44px;line-height:44px;text-align:left;white-space:nowrap;overflow:hidden;font-size:28px;color:#fff;">复杂表格示例</div>
<div style="position:absolute;left:2789px;top:1053px;width:5px;height:5px;background:#fff;border-radius:1px;"></div>
<div style="position:absolute;left:2789px;top:1062px;width:5px;height:5px;background:#fff;border-radius:1px;"></div>
<div style="position:absolute;left:2789px;top:1071px;width:5px;height:5px;background:#fff;border-radius:1px;"></div>
<div style="position:absolute;left:380px;top:1320px;width:2060px;height:64px;background:linear-gradient(to bottom, rgba(0,0,0,0) 0%, rgba(40,40,60,0.10) 100%);-webkit-mask-image:linear-gradient(to right, transparent 0, #000 20%, #000 80%, transparent 100%);pointer-events:none;"></div>
<div style="position:absolute;left:100px;top:117px;width:200px;height:40px;line-height:40px;text-align:center;font-size:30px;color:rgba(100,100,108,0.13);transform:rotate(-31deg);white-space:nowrap;pointer-events:none;">Jojo 2009</div>
<div style="position:absolute;left:560px;top:117px;width:200px;height:40px;line-height:40px;text-align:center;font-size:30px;color:rgba(100,100,108,0.13);transform:rotate(-31deg);white-space:nowrap;pointer-events:none;">Jojo 2009</div>
<div style="position:absolute;left:1020px;top:117px;width:200px;height:40px;line-height:40px;text-align:center;font-size:30px;color:rgba(100,100,108,0.13);transform:rotate(-31deg);white-space:nowrap;pointer-events:none;">Jojo 2009</div>
<div style="position:absolute;left:1480px;top:117px;width:200px;height:40px;line-height:40px;text-align:center;font-size:30px;color:rgba(100,100,108,0.13);transform:rotate(-31deg);white-space:nowrap;pointer-events:none;">Jojo 2009</div>
<div style="position:absolute;left:1940px;top:117px;width:200px;height:40px;line-height:40px;text-align:center;font-size:30px;color:rgba(100,100,108,0.13);transform:rotate(-31deg);white-space:nowrap;pointer-events:none;">Jojo 2009</div>
<div style="position:absolute;left:2400px;top:117px;width:200px;height:40px;line-height:40px;text-align:center;font-size:30px;color:rgba(100,100,108,0.13);transform:rotate(-31deg);white-space:nowrap;pointer-events:none;">Jojo 2009</div>
<div style="position:absolute;left:2860px;top:117px;width:200px;height:40px;line-height:40px;text-align:center;font-size:30px;color:rgba(100,100,108,0.13);transform:rotate(-31deg);white-space:nowrap;pointer-events:none;">Jojo 2009</div>
<div style="position:absolute;left:-130px;top:477px;width:200px;height:40px;line-height:40px;text-align:center;font-size:30px;color:rgba(100,100,108,0.13);transform:rotate(-31deg);white-space:nowrap;pointer-events:none;">Jojo 2009</div>
<div style="position:absolute;left:330px;top:477px;width:200px;height:40px;line-height:40px;text-align:center;font-size:30px;color:rgba(100,100,108,0.13);transform:rotate(-31deg);white-space:nowrap;pointer-events:none;">Jojo 2009</div>
<div style="position:absolute;left:790px;top:477px;width:200px;height:40px;line-height:40px;text-align:center;font-size:30px;color:rgba(100,100,108,0.13);transform:rotate(-31deg);white-space:nowrap;pointer-events:none;">Jojo 2009</div>
<div style="position:absolute;left:1250px;top:477px;width:200px;height:40px;line-height:40px;text-align:center;font-size:30px;color:rgba(100,100,108,0.13);transform:rotate(-31deg);white-space:nowrap;pointer-events:none;">Jojo 2009</div>
<div style="position:absolute;left:1710px;top:477px;width:200px;height:40px;line-height:40px;text-align:center;font-size:30px;color:rgba(100,100,108,0.13);transform:rotate(-31deg);white-space:nowrap;pointer-events:none;">Jojo 2009</div>
<div style="position:absolute;left:2170px;top:477px;width:200px;height:40px;line-height:40px;text-align:center;font-size:30px;color:rgba(100,100,108,0.13);transform:rotate(-31deg);white-space:nowrap;pointer-events:none;">Jojo 2009</div>
<div style="position:absolute;left:2630px;top:477px;width:200px;height:40px;line-height:40px;text-align:center;font-size:30px;color:rgba(100,100,108,0.13);transform:rotate(-31deg);white-space:nowrap;pointer-events:none;">Jojo 2009</div>
<div style="position:absolute;left:100px;top:838px;width:200px;height:40px;line-height:40px;text-align:center;font-size:30px;color:rgba(100,100,108,0.13);transform:rotate(-31deg);white-space:nowrap;pointer-events:none;">Jojo 2009</div>
<div style="position:absolute;left:560px;top:838px;width:200px;height:40px;line-height:40px;text-align:center;font-size:30px;color:rgba(100,100,108,0.13);transform:rotate(-31deg);white-space:nowrap;pointer-events:none;">Jojo 2009</div>
<div style="position:absolute;left:1020px;top:838px;width:200px;height:40px;line-height:40px;text-align:center;font-size:30px;color:rgba(100,100,108,0.13);transform:rotate(-31deg);white-space:nowrap;pointer-events:none;">Jojo 2009</div>
<div style="position:absolute;left:1480px;top:838px;width:200px;height:40px;line-height:40px;text-align:center;font-size:30px;color:rgba(100,100,108,0.13);transform:rotate(-31deg);white-space:nowrap;pointer-events:none;">Jojo 2009</div>
<div style="position:absolute;left:1940px;top:838px;width:200px;height:40px;line-height:40px;text-align:center;font-size:30px;color:rgba(100,100,108,0.13);transform:rotate(-31deg);white-space:nowrap;pointer-events:none;">Jojo 2009</div>
<div style="position:absolute;left:2400px;top:838px;width:200px;height:40px;line-height:40px;text-align:center;font-size:30px;color:rgba(100,100,108,0.13);transform:rotate(-31deg);white-space:nowrap;pointer-events:none;">Jojo 2009</div>
<div style="position:absolute;left:2860px;top:838px;width:200px;height:40px;line-height:40px;text-align:center;font-size:30px;color:rgba(100,100,108,0.13);transform:rotate(-31deg);white-space:nowrap;pointer-events:none;">Jojo 2009</div>
<div style="position:absolute;left:-130px;top:1198px;width:200px;height:40px;line-height:40px;text-align:center;font-size:30px;color:rgba(100,100,108,0.13);transform:rotate(-31deg);white-space:nowrap;pointer-events:none;">Jojo 2009</div>
<div style="position:absolute;left:330px;top:1198px;width:200px;height:40px;line-height:40px;text-align:center;font-size:30px;color:rgba(100,100,108,0.13);transform:rotate(-31deg);white-space:nowrap;pointer-events:none;">Jojo 2009</div>
<div style="position:absolute;left:790px;top:1198px;width:200px;height:40px;line-height:40px;text-align:center;font-size:30px;color:rgba(100,100,108,0.13);transform:rotate(-31deg);white-space:nowrap;pointer-events:none;">Jojo 2009</div>
<div style="position:absolute;left:1250px;top:1198px;width:200px;height:40px;line-height:40px;text-align:center;font-size:30px;color:rgba(100,100,108,0.13);transform:rotate(-31deg);white-space:nowrap;pointer-events:none;">Jojo 2009</div>
<div style="position:absolute;left:1710px;top:1198px;width:200px;height:40px;line-height:40px;text-align:center;font-size:30px;color:rgba(100,100,108,0.13);transform:rotate(-31deg);white-space:nowrap;pointer-events:none;">Jojo 2009</div>
<div style="position:absolute;left:2170px;top:1198px;width:200px;height:40px;line-height:40px;text-align:center;font-size:30px;color:rgba(100,100,108,0.13);transform:rotate(-31deg);white-space:nowrap;pointer-events:none;">Jojo 2009</div>
<div style="position:absolute;left:2630px;top:1198px;width:200px;height:40px;line-height:40px;text-align:center;font-size:30px;color:rgba(100,100,108,0.13);transform:rotate(-31deg);white-space:nowrap;pointer-events:none;">Jojo 2009</div>
</body></html>
